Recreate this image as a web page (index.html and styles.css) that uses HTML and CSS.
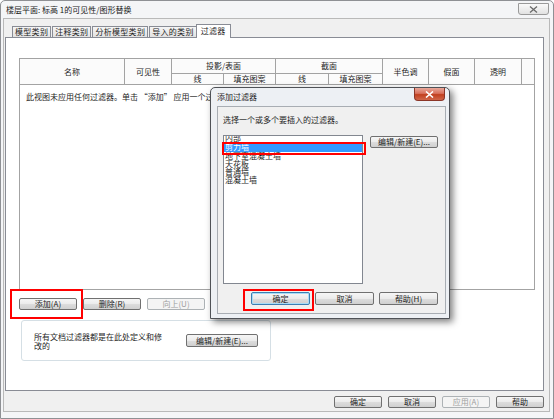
FILE: index.html
```html
<!DOCTYPE html>
<html lang="zh-CN">
<head>
    <meta charset="UTF-8">
    <meta name="viewport" content="width=device-width, initial-scale=1.0">
    <title>可见性/图形替换</title>
    <link rel="stylesheet" href="styles.css">
</head>
<body>

    <div class="window">
        <!-- Title bar -->
        <div class="titlebar">
            <span class="title">楼层平面: 标高 1的可见性/图形替换</span>
            <span class="close-btn">
                <svg width="9" height="7" viewBox="0 0 9 7"><path d="M1 0.5 L8 6.5 M8 0.5 L1 6.5" stroke="#6b6b6b" stroke-width="1.3" fill="none"/></svg>
            </span>
        </div>

        <div class="client">
            <!-- Tabs -->
            <div class="tabs">
                <div class="tab">模型类别</div>
                <div class="tab">注释类别</div>
                <div class="tab">分析模型类别</div>
                <div class="tab">导入的类别</div>
                <div class="tab active">过滤器</div>
            </div>

            <div class="panel">
                <div class="grid-box">
                    <table class="grid">
                        <colgroup>
                            <col style="width:105px">
                            <col style="width:47px">
                            <col style="width:52px">
                            <col style="width:52px">
                            <col style="width:53px">
                            <col style="width:54px">
                            <col style="width:46px">
                            <col style="width:46px">
                            <col style="width:47px">
                            <col style="width:12px">
                        </colgroup>
                        <thead>
                            <tr class="head-top">
                                <th rowspan="2">名称</th>
                                <th rowspan="2">可见性</th>
                                <th colspan="2">投影/表面</th>
                                <th colspan="2">截面</th>
                                <th rowspan="2">半色调</th>
                                <th rowspan="2">假面</th>
                                <th rowspan="2">透明</th>
                                <th rowspan="2" class="last"></th>
                            </tr>
                            <tr class="head-sub">
                                <th>线</th>
                                <th>填充图案</th>
                                <th>线</th>
                                <th>填充图案</th>
                            </tr>
                        </thead>
                        <tbody>
                            <tr>
                                <td colspan="10" class="empty">此视图未应用任何过滤器。单击 “添加” 应用一个过滤器。</td>
                            </tr>
                        </tbody>
                    </table>
                </div>

                <div class="row-buttons">
                    <button class="btn">添加(A)</button>
                    <button class="btn">删除(R)</button>
                    <button class="btn" disabled>向上(U)</button>
                    <button class="btn" disabled>向下(D)</button>
                </div>

                <div class="groupbox">
                    <p class="group-text">所有文档过滤器都是在此处定义和修改的</p>
                    <button class="btn btn-edit">编辑/新建(E)...</button>
                </div>
            </div>

            <div class="footer">
                <button class="btn btn-foot">确定</button>
                <button class="btn btn-foot">取消</button>
                <button class="btn btn-foot" disabled>应用(A)</button>
                <button class="btn btn-foot">帮助</button>
            </div>
        </div>

        <!-- Add filter dialog -->
        <div class="dialog">
            <div class="dialog-title">
                <span>添加过滤器</span>
                <span class="dialog-close">
                    <svg width="9" height="7" viewBox="0 0 9 7"><path d="M1 0.5 L8 6.5 M8 0.5 L1 6.5" stroke="#fff" stroke-width="1.6" fill="none"/></svg>
                </span>
            </div>
            <div class="dialog-body">
                <p class="prompt">选择一个或多个要插入的过滤器。</p>
                <div class="pick">
                    <ul class="listbox">
                        <li class="first">内部</li>
                        <li class="selected">剪力墙</li>
                        <li>地下室混凝土墙</li>
                        <li>天花板</li>
                        <li>普通墙</li>
                        <li>混凝土墙</li>
                    </ul>
                    <button class="btn btn-dlg-edit">编辑/新建(E)...</button>
                </div>
                <div class="dialog-buttons">
                    <button class="btn btn-dlg btn-default">确定</button>
                    <button class="btn btn-dlg">取消</button>
                    <button class="btn btn-dlg">帮助(H)</button>
                </div>
            </div>
        </div>

        <!-- Red callouts -->
        <div class="mark mark-add"></div>
        <div class="mark mark-item"></div>
        <div class="mark mark-ok"></div>
    </div>

</body>
</html>
```

FILE: styles.css
```css
body {
    margin: 0;
    font-family: "Noto Sans CJK SC", "Liberation Sans", sans-serif;
    font-size: 8px;
    color: #1e1e1e;
    background: #fff;
}

.window {
    position: relative;
    width: 554px;
    height: 419px;
    box-sizing: border-box;
    border: 1px solid #8e9094;
    border-radius: 5px 5px 0 0;
    background: #f4f5f7;
    overflow: hidden;
}

.titlebar {
    height: 17px;
    display: flex;
    align-items: center;
    padding-left: 5px;
}

.title {
    line-height: 10px;
    color: #1b1b1b;
}

.close-btn {
    margin-left: auto;
    margin-right: 4px;
    align-self: flex-start;
    margin-top: 2px;
    width: 31px;
    height: 12px;
    box-sizing: border-box;
    border: 1px solid #9a9a9a;
    border-radius: 0 0 3px 3px;
    background: linear-gradient(#fafafa, #e2e2e2);
    display: flex;
    align-items: center;
    justify-content: center;
}

.client {
    margin: 0 3px 0 2px;
    height: 394px;
    box-sizing: border-box;
    border: 1px solid #b9b9b9;
    background: #f0f0f0;
    padding: 5px 5px 0 1px;
}

/* Tabs */
.tabs {
    display: flex;
    align-items: flex-end;
    height: 13px;
    padding-left: 7px;
}

.tab {
    height: 11px;
    box-sizing: border-box;
    border: 1px solid #898c95;
    border-bottom: none;
    padding: 0 2px;
    margin-right: 1px;
    line-height: 10px;
    letter-spacing: 0.3px;
    background: linear-gradient(#f5f5f5, #e2e2e2);
    white-space: nowrap;
}

.tab.active {
    position: relative;
    z-index: 1;
    height: 14px;
    margin: 0 -2px -1px -2px;
    padding: 0 4px;
    background: #fff;
    line-height: 12px;
}

.panel {
    height: 354px;
    box-sizing: border-box;
    border: 1px solid #898c95;
    background: #fff;
    padding: 20px 8px 0 13px;
}

/* Filter table */
.grid-box {
    width: 516px;
    height: 232px;
    box-sizing: border-box;
    border: 1px solid #a3a3a3;
    overflow: hidden;
}

.grid {
    width: 514px;
    table-layout: fixed;
    border-collapse: separate;
    border-spacing: 0;
}

.grid th {
    font-weight: normal;
    padding: 0;
    text-align: center;
    border-right: 1px solid #a3a3a3;
    border-bottom: 1px solid #a3a3a3;
    background: #fbfbfb;
    white-space: nowrap;
}

.grid th.last {
    border-right: none;
}

.head-top th {
    height: 14px;
    line-height: 14px;
}

.head-sub th {
    height: 10px;
    line-height: 10px;
}

.grid td.empty {
    padding: 7px 0 0 6px;
    line-height: 10px;
    white-space: nowrap;
}

/* Buttons */
.btn {
    box-sizing: border-box;
    height: 12px;
    margin: 0;
    padding: 0;
    border: 1px solid #707070;
    border-radius: 2px;
    background: linear-gradient(#f6f6f6 0%, #ebebeb 50%, #dddddd 51%, #d0d0d0 100%);
    font-family: inherit;
    font-size: 8px;
    line-height: 10px;
    color: #1e1e1e;
    white-space: nowrap;
}

.btn:disabled {
    border-color: #adb2b5;
    background: #f4f4f4;
    color: #a0a0a0;
}

.row-buttons {
    display: flex;
    gap: 6px;
    margin-top: 8px;
}

.row-buttons .btn {
    width: 58px;
}

.groupbox {
    display: flex;
    align-items: center;
    width: 250px;
    height: 41px;
    box-sizing: border-box;
    margin: 10px 0 0 2px;
    border: 1px solid #d5dfe5;
    border-radius: 3px;
    padding-left: 12px;
}

.group-text {
    width: 130px;
    margin: 0;
    line-height: 9px;
}

.btn-edit {
    width: 72px;
    height: 13px;
    margin-left: 22px;
}

.footer {
    display: flex;
    justify-content: flex-end;
    gap: 6px;
    padding-top: 5px;
}

.btn-foot {
    width: 48px;
    height: 12px;
}

/* Dialog */
.dialog {
    position: absolute;
    left: 209px;
    top: 86px;
    width: 240px;
    height: 232px;
    box-sizing: border-box;
    border: 1px solid #4f5257;
    border-radius: 5px 5px 0 0;
    background: #edf0f4;
    box-shadow: 3px 3px 7px rgba(0, 0, 0, 0.5);
    padding: 0 3px 4px 6px;
    z-index: 2;
}

.dialog-title {
    height: 18px;
    display: flex;
    align-items: center;
    line-height: 10px;
}

.dialog-close {
    margin-left: auto;
    margin-right: 1px;
    align-self: flex-start;
    width: 31px;
    height: 13px;
    box-sizing: border-box;
    border: 1px solid #8b3527;
    border-top: none;
    border-radius: 0 0 4px 4px;
    background: linear-gradient(#e9a99b 0%, #d8705c 45%, #c2401f 55%, #d0664a 100%);
    display: flex;
    align-items: center;
    justify-content: center;
}

.dialog-body {
    height: 208px;
    box-sizing: border-box;
    border: 1px solid #a8adb3;
    background: #f0f0f0;
    padding: 8px 7px 0 5px;
}

.prompt {
    margin: 0;
    line-height: 10px;
}

.pick {
    display: flex;
    align-items: flex-start;
    margin-top: 10px;
}

.listbox {
    list-style: none;
    margin: 0;
    padding: 0;
    width: 140px;
    height: 149px;
    box-sizing: border-box;
    border: 1px solid #828790;
    background: #fff;
    overflow: hidden;
}

.listbox li {
    height: 8px;
    line-height: 8px;
    padding-left: 1px;
    white-space: nowrap;
}

.listbox li.first {
    margin-top: -2px;
}

.listbox li.selected {
    height: 10px;
    line-height: 10px;
    background: #3399ff;
    color: #fff;
}

.btn-dlg-edit {
    width: 68px;
    margin-left: 7px;
    margin-top: 1px;
}

.dialog-buttons {
    display: flex;
    justify-content: flex-end;
    gap: 5px;
    margin-top: 8px;
}

.btn-dlg {
    width: 59px;
    height: 13px;
}

.btn-default {
    border-color: #3c7fb1;
    box-shadow: inset 0 0 0 1px #a8dcf7;
}

/* Red callouts */
.mark {
    position: absolute;
    box-sizing: border-box;
    border: 2px solid #f00;
    z-index: 3;
}

.mark-add {
    left: 9px;
    top: 288px;
    width: 73px;
    height: 30px;
}

.mark-item {
    left: 221px;
    top: 141px;
    width: 144px;
    height: 13px;
}

.mark-ok {
    left: 242px;
    top: 288px;
    width: 71px;
    height: 22px;
}
```
